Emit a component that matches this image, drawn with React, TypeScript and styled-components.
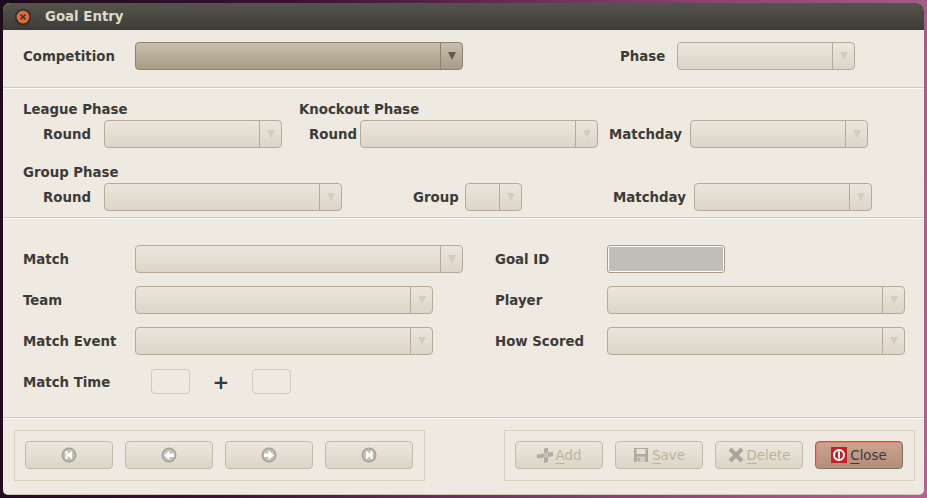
import styled, { createGlobalStyle } from "styled-components";

const GlobalStyle = createGlobalStyle`
  html, body {
    margin: 0;
    padding: 0;
    width: 927px;
    height: 498px;
    overflow: hidden;
  }
  body {
    font-family: "DejaVu Sans", sans-serif;
  }
`;

const Desktop = styled.div`
  width: 927px;
  height: 498px;
  padding: 3px;
  box-sizing: border-box;
  background: linear-gradient(100deg, #1d0a1a 0%, #3c1236 30%, #7a3d68 62%, #b0648f 100%);
`;

const Window = styled.div`
  box-sizing: border-box;
  width: 921px;
  height: 492px;
  display: flex;
  flex-direction: column;
  border-radius: 7px 7px 5px 5px;
  border-bottom: 1px solid #cfc4ae;
  overflow: hidden;
  background: #eeeae2;
`;

const TitleBar = styled.div`
  height: 27px;
  display: flex;
  align-items: center;
  padding-left: 12px;
  gap: 14px;
  color: #dfd8c8;
  font-size: 13.33px;
  font-weight: 700;
  background: linear-gradient(#55544c, #3c3b37);
`;

const CloseDot = styled.svg`
  width: 16px;
  height: 16px;
  flex: none;
`;

const Section = styled.div<{ $height: number; $top: number }>`
  box-sizing: border-box;
  height: ${(p) => p.$height}px;
  padding-top: ${(p) => p.$top}px;
  padding-left: 20px;
  display: flex;
  flex-direction: column;
  border-bottom: 1px solid #cdc9c0;
  box-shadow: 0 1px 0 #fbfaf7;
`;

const Row = styled.div<{ $cols: string; $gap?: number }>`
  display: grid;
  grid-template-columns: ${(p) => p.$cols};
  align-items: center;
  height: 28px;
  margin-bottom: ${(p) => p.$gap ?? 0}px;
`;

const Heading = styled.div<{ $cols?: string; $top?: number }>`
  display: grid;
  grid-template-columns: ${(p) => p.$cols ?? "1fr"};
  height: 18px;
  margin-top: ${(p) => p.$top ?? 0}px;
  margin-bottom: 2px;
  align-items: center;
`;

const Label = styled.span<{ $indent?: number }>`
  padding-left: ${(p) => p.$indent ?? 0}px;
  color: #3c3b37;
  font-size: 13.33px;
  font-weight: 700;
  white-space: nowrap;
`;

const ComboBox = styled.div<{ $active?: boolean }>`
  box-sizing: border-box;
  height: 28px;
  display: flex;
  border-radius: 4px;
  border: 1px solid ${(p) => (p.$active ? "#8c8270" : "#b5aa98")};
  background: ${(p) =>
    p.$active
      ? "linear-gradient(#cabfae, #a99b86)"
      : "linear-gradient(#ebe6dd, #dcd5c8)"};
`;

const ComboField = styled.div`
  flex: 1;
`;

const ComboArrow = styled.div<{ $active?: boolean }>`
  width: 21px;
  display: flex;
  align-items: center;
  justify-content: center;
  border-left: 1px solid ${(p) => (p.$active ? "#8c8270" : "#b5aa98")};

  &::after {
    content: "";
    border-style: solid;
    border-width: 8px 4px 0;
    border-color: ${(p) => (p.$active ? "#5f5b50" : "#d2ccbe")} transparent transparent;
  }
`;

const GoalId = styled.div`
  box-sizing: border-box;
  width: 118px;
  height: 28px;
  border: 1px solid #a99c88;
  border-radius: 3px;
  padding: 1px;
  background: #fbfaf7;

  &::after {
    content: "";
    display: block;
    height: 100%;
    background: #c1bdb7;
  }
`;

const TimeRow = styled.div`
  display: flex;
  align-items: center;
  height: 25px;
  margin-top: 14px;
`;

const TimeLabel = styled(Label)`
  width: 128px;
  padding-top: 2px;
`;

const TimeInput = styled.div`
  box-sizing: border-box;
  width: 39px;
  height: 25px;
  border: 1px solid #d3c9b6;
  border-radius: 4px;
`;

const Plus = styled.span`
  width: 62px;
  text-align: center;
  color: #333a45;
  font-size: 20px;
  font-weight: 700;
`;

const Footer = styled.div`
  flex: 1;
  display: flex;
  justify-content: space-between;
  padding: 12px 9px 0 11px;
`;

const ButtonGroup = styled.div`
  box-sizing: border-box;
  width: 411px;
  height: 51px;
  display: flex;
  align-items: flex-start;
  gap: 12px;
  padding: 10px 0 0 10px;
  border: 1px solid #d9d0bf;
`;

const Button = styled.button<{ $focused?: boolean }>`
  box-sizing: border-box;
  width: 88px;
  height: 28px;
  padding: 0;
  display: flex;
  align-items: center;
  justify-content: center;
  gap: 3px;
  border-radius: 4px;
  border: 1px solid ${(p) => (p.$focused ? "#7d7263" : "#c3b9a6")};
  box-shadow: ${(p) => (p.$focused ? "inset 0 0 0 1px #e0806a" : "none")};
  background: ${(p) =>
    p.$focused
      ? "linear-gradient(#c9a592, #b58d78)"
      : "linear-gradient(#ebe6dd, #dcd5c8)"};
  color: ${(p) => (p.$focused ? "#3c3b37" : "#bfb29c")};
  font-family: "DejaVu Sans", sans-serif;
  font-size: 13.33px;

  u {
    text-underline-offset: 3px;
  }
`;

const NavIcon = styled.svg`
  width: 16px;
  height: 16px;
`;

const ActionIcon = styled.svg`
  width: 16px;
  height: 16px;
  flex: none;
`;

function Combo({ active }: { active?: boolean }) {
  return (
    <ComboBox $active={active}>
      <ComboField />
      <ComboArrow $active={active} />
    </ComboBox>
  );
}

function Nav({ glyph }: { glyph: string }) {
  return (
    <Button>
      <NavIcon viewBox="0 0 16 16">
        <circle cx="8" cy="8" r="7.5" fill="#a5a29c" />
        <circle cx="8" cy="8" r="6" fill="#c3c0ba" />
        <path d={glyph} fill="#fff" />
      </NavIcon>
    </Button>
  );
}

export default function App() {
  return (
    <Desktop>
      <GlobalStyle />
      <Window>
        <TitleBar>
          <CloseDot viewBox="0 0 16 16">
            <circle cx="8" cy="8" r="8" fill="#2d2c28" />
            <circle cx="8" cy="8" r="6.4" fill="#e2683a" />
            <path d="M5.6 5.6l4.8 4.8M10.4 5.6l-4.8 4.8" stroke="#3c3b37" strokeWidth="1.5" />
          </CloseDot>
          Goal Entry
        </TitleBar>

        <Section $height={58} $top={12}>
          <Row $cols="112px 328px 157px 57px 178px">
            <Label>Competition</Label>
            <Combo active />
            <span />
            <Label>Phase</Label>
            <Combo />
          </Row>
        </Section>

        <Section $height={130} $top={12}>
          <Heading $cols="276px 1fr">
            <Label>League Phase</Label>
            <Label>Knockout Phase</Label>
          </Heading>
          <Row $cols="81px 178px 27px 51px 238px 11px 81px 178px">
            <Label $indent={20}>Round</Label>
            <Combo />
            <span />
            <Label>Round</Label>
            <Combo />
            <span />
            <Label>Matchday</Label>
            <Combo />
          </Row>
          <Heading $top={15}>
            <Label>Group Phase</Label>
          </Heading>
          <Row $cols="81px 238px 71px 52px 57px 91px 81px 178px">
            <Label $indent={20}>Round</Label>
            <Combo />
            <span />
            <Label>Group</Label>
            <Combo />
            <span />
            <Label>Matchday</Label>
            <Combo />
          </Row>
        </Section>

        <Section $height={200} $top={27}>
          <Row $cols="112px 328px 32px 112px 118px" $gap={13}>
            <Label>Match</Label>
            <Combo />
            <span />
            <Label>Goal ID</Label>
            <GoalId />
          </Row>
          <Row $cols="112px 298px 62px 112px 298px" $gap={13}>
            <Label>Team</Label>
            <Combo />
            <span />
            <Label>Player</Label>
            <Combo />
          </Row>
          <Row $cols="112px 298px 62px 112px 298px">
            <Label>Match Event</Label>
            <Combo />
            <span />
            <Label>How Scored</Label>
            <Combo />
          </Row>
          <TimeRow>
            <TimeLabel>Match Time</TimeLabel>
            <TimeInput />
            <Plus>+</Plus>
            <TimeInput />
          </TimeRow>
        </Section>

        <Footer>
          <ButtonGroup>
            <Nav glyph="M4.5 4h2v3l4.500-3.200v8.400L6.500 9v3h-2z" />
            <Nav glyph="M8.500 3.500v3H13v3.400H8.500v3L3 8.200z" />
            <Nav glyph="M7.500 3.500v3H3v3.400h4.500v3L13 8.200z" />
            <Nav glyph="M11.500 4h-2v3L5 3.800v8.400L9.500 9v3h2z" />
          </ButtonGroup>
          <ButtonGroup>
            <Button disabled>
              <ActionIcon viewBox="0 0 16 16">
                <path d="M7 1.500l4-.5v4.500l5-.5v4l-5 1v5l-4 1v-5.500l-7 1v-4l7-1z" fill="#b0aca3" />
                <path d="M7 6l4-.5v4.500l-4 .8z" fill="#c8c4bb" />
              </ActionIcon>
              <span>
                <u>A</u>dd
              </span>
            </Button>
            <Button disabled>
              <ActionIcon viewBox="0 0 16 16">
                <path d="M1 1h14v14H1z" fill="#aeaaa1" />
                <path d="M3.500 2h9v5h-9z" fill="#e6e2d9" />
                <path d="M4 9.500h8V15H4z" fill="#d2cec5" />
                <path d="M5 11h2v3H5z" fill="#aeaaa1" />
              </ActionIcon>
              <span>
                <u>S</u>ave
              </span>
            </Button>
            <Button disabled>
              <ActionIcon viewBox="0 0 16 16">
                <path d="M2 2l12 12M14 2L2 14" stroke="#aaa69d" strokeWidth="4" />
              </ActionIcon>
              <span>
                <u>D</u>elete
              </span>
            </Button>
            <Button $focused>
              <ActionIcon viewBox="0 0 16 16">
                <rect width="16" height="16" fill="#c8202a" />
                <circle cx="8" cy="8" r="5" fill="none" stroke="#fff" strokeWidth="2" />
                <path d="M8 4.500v7" stroke="#fff" strokeWidth="2" />
              </ActionIcon>
              <span>
                <u>C</u>lose
              </span>
            </Button>
          </ButtonGroup>
        </Footer>
      </Window>
    </Desktop>
  );
}
